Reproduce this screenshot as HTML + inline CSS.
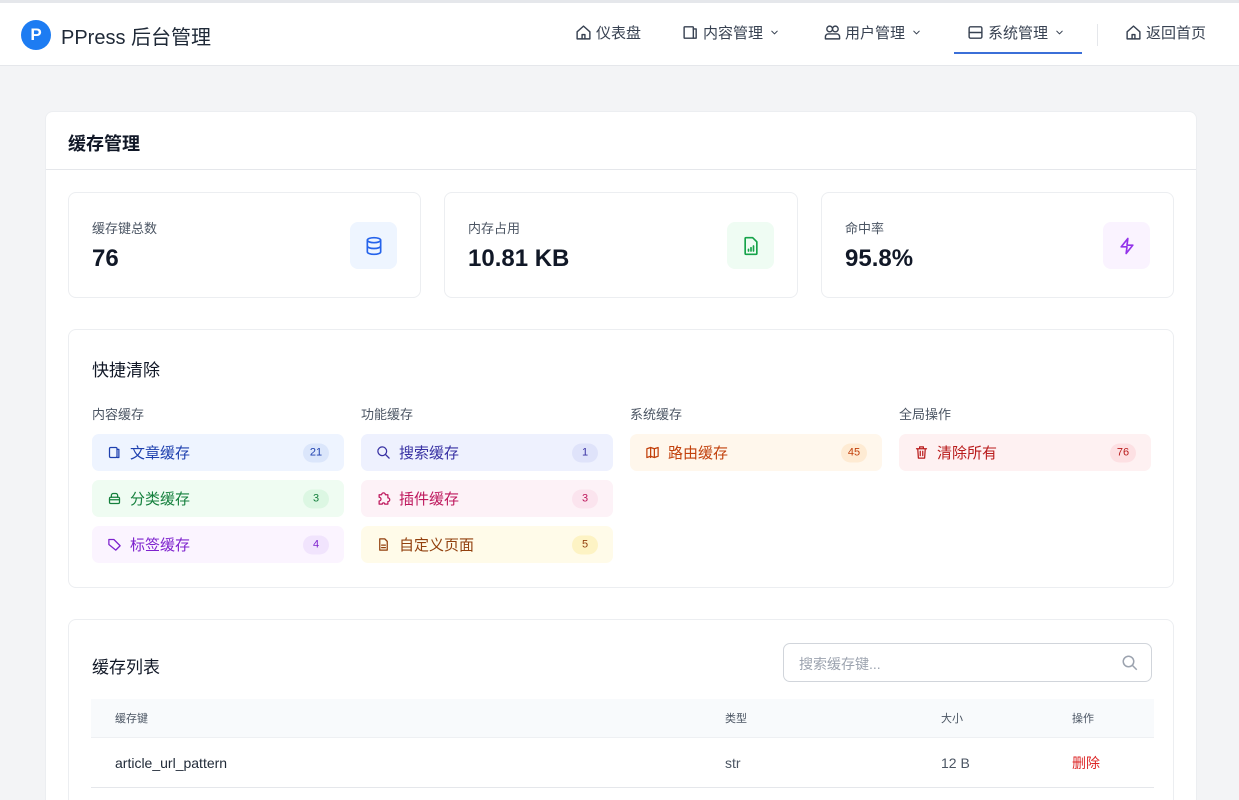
<!DOCTYPE html>
<html><head><meta charset="utf-8"><style>
*{box-sizing:border-box;margin:0;padding:0}
html,body{width:1239px;height:800px;overflow:hidden}
body{background:#f3f4f6;font-family:"Liberation Sans","Noto Sans CJK SC",sans-serif;color:#111827;position:relative}
.hdr{position:absolute;left:0;top:0;width:1239px;height:66px;background:#fff;border-top:3px solid #e5e7eb;border-bottom:1px solid #e5e7eb}
.logo{position:absolute;left:21px;top:17px;width:30px;height:30px;border-radius:50%;background:#1d7cf2;color:#fff;font-weight:bold;font-size:17px;text-align:center;line-height:30px}
.brand{position:absolute;left:61px;top:18px;font-size:20px;color:#1f2937}
.nav{position:absolute;top:19px;font-size:15px;color:#374151;display:flex;align-items:center;gap:4px}
.nav svg{width:17px;height:17px;fill:none;stroke:#374151;stroke-width:2;stroke-linecap:round;stroke-linejoin:round}
.nav .cv{width:11px;height:11px;margin-left:2px}
.ul{position:absolute;left:954px;top:49px;width:128px;height:2px;background:#3b6fd8}
.sep{position:absolute;left:1097px;top:21px;width:1px;height:22px;background:#e5e7eb}
.card{position:absolute;left:45px;top:111px;width:1152px;height:689px;background:#fff;border-radius:8px 8px 0 0;border:1px solid #eceef1;border-bottom:none;overflow:hidden}
.ct{position:absolute;left:22px;top:18px;font-size:18px;font-weight:bold}
.cl{position:absolute;left:0;top:57px;width:100%;height:1px;background:#e5e7eb}
.box{position:absolute;background:#fff;border:1px solid #eceef1;border-radius:8px}
.sl{position:absolute;left:23px;top:25px;font-size:13px;color:#4b5563}
.sv{position:absolute;left:23px;top:52px;font-size:24px;font-weight:bold;color:#111827}
.ic{position:absolute;right:23px;top:29px;width:47px;height:47px;border-radius:8px;display:flex;align-items:center;justify-content:center}
.ic svg{width:20px;height:20px;fill:none;stroke-width:2;stroke-linecap:round;stroke-linejoin:round}
.gl{position:absolute;top:74px;font-size:13px;color:#4b5563}
.btn{position:absolute;width:252px;height:37px;border-radius:7px;display:flex;align-items:center;padding-left:15px;font-size:15px}
.btn svg{width:15px;height:15px;fill:none;stroke-width:2;stroke-linecap:round;stroke-linejoin:round;margin-right:8px}
.bd{position:absolute;right:15px;top:50%;transform:translateY(-50%);min-width:26px;height:19px;border-radius:10px;font-size:11px;text-align:center;line-height:19px;padding:0 5px}
.th{position:absolute;left:22px;top:79px;width:1063px;height:38px;background:#f8fafc;font-size:11px;color:#4b5563}
.tr{position:absolute;left:22px;top:117px;width:1063px;height:51px;border-top:1px solid #eef0f3;border-bottom:1px solid #e5e7eb;font-size:14px;color:#1f2937}
.th span,.tr span{position:absolute;top:50%;transform:translateY(-50%)}
</style></head><body>
<div class="hdr">
<div class="logo">P</div><div class="brand">PPress 后台管理</div>
<div class="nav" style="left:575px"><svg viewBox="0 0 24 24"><path d="M3 11l9-8 9 8v10H3z"/><path d="M10 21v-6h4v6"/></svg>仪表盘</div>
<div class="nav" style="left:682px"><svg viewBox="0 0 24 24"><rect x="3" y="4" width="13" height="16" rx="1"/><path d="M16 7h4v13h-4"/></svg>内容管理<svg class="cv" viewBox="0 0 24 24"><path d="M6 9l6 6 6-6"/></svg></div>
<div class="nav" style="left:824px"><svg viewBox="0 0 24 24"><circle cx="8" cy="7" r="4"/><circle cx="16" cy="7" r="4"/><path d="M2 21v-3a4 4 0 014-4h12a4 4 0 014 4v3z"/></svg>用户管理<svg class="cv" viewBox="0 0 24 24"><path d="M6 9l6 6 6-6"/></svg></div>
<div class="nav" style="left:967px"><svg viewBox="0 0 24 24"><rect x="3" y="4" width="18" height="16" rx="2"/><path d="M3 12h18"/></svg>系统管理<svg class="cv" viewBox="0 0 24 24"><path d="M6 9l6 6 6-6"/></svg></div>
<div class="ul"></div><div class="sep"></div>
<div class="nav" style="left:1125px"><svg viewBox="0 0 24 24"><path d="M3 11l9-8 9 8v10H3z"/><path d="M10 21v-6h4v6"/></svg>返回首页</div>
</div>
<div class="card">
<div class="ct">缓存管理</div><div class="cl"></div>
<div class="box" style="left:22px;top:80px;width:353px;height:106px"><div class="sl">缓存键总数</div><div class="sv">76</div>
<div class="ic" style="background:#eef5ff"><svg viewBox="0 0 24 24" stroke="#2563eb"><ellipse cx="12" cy="5" rx="8" ry="3"/><path d="M4 5v14c0 1.7 3.6 3 8 3s8-1.3 8-3V5"/><path d="M4 12c0 1.7 3.6 3 8 3s8-1.3 8-3"/></svg></div></div>
<div class="box" style="left:398px;top:80px;width:354px;height:106px"><div class="sl">内存占用</div><div class="sv">10.81 KB</div>
<div class="ic" style="background:#effcf3"><svg viewBox="0 0 24 24" stroke="#16a34a"><path d="M14 2H6a1 1 0 00-1 1v18a1 1 0 001 1h12a1 1 0 001-1V7z"/><path d="M9 18v-2M12 18v-4M15 18v-6"/></svg></div></div>
<div class="box" style="left:775px;top:80px;width:353px;height:106px"><div class="sl">命中率</div><div class="sv">95.8%</div>
<div class="ic" style="background:#faf3ff"><svg viewBox="0 0 24 24" stroke="#9333ea"><path d="M13 3L5 13h7l-1 8 8-10h-7z"/></svg></div></div>
<div class="box" style="left:22px;top:217px;width:1106px;height:259px">
<div style="position:absolute;left:23px;top:26px;font-size:17px">快捷清除</div>
<div class="gl" style="left:23px">内容缓存</div><div class="gl" style="left:292px">功能缓存</div><div class="gl" style="left:561px">系统缓存</div><div class="gl" style="left:830px">全局操作</div>
<div class="btn" style="left:23px;top:104px;background:#eef4ff;color:#1e40af"><svg viewBox="0 0 24 24" stroke="#1e40af"><rect x="4" y="4" width="12" height="16" rx="2"/><path d="M16 7h3v13h-3"/></svg>文章缓存<span class="bd" style="background:#dbe6fb">21</span></div>
<div class="btn" style="left:23px;top:150px;background:#effcf2;color:#15803d"><svg viewBox="0 0 24 24" stroke="#15803d"><rect x="4" y="10" width="16" height="10" rx="2"/><path d="M7 10V7a3 3 0 013-3h4a3 3 0 013 3v3M4 14h16"/></svg>分类缓存<span class="bd" style="background:#dcf7e3">3</span></div>
<div class="btn" style="left:23px;top:196px;background:#fbf4ff;color:#7e22ce"><svg viewBox="0 0 24 24" stroke="#7e22ce"><path d="M3 12V4h8l10 10-7 7z"/></svg>标签缓存<span class="bd" style="background:#f1e4fd">4</span></div>
<div class="btn" style="left:292px;top:104px;background:#eef1fe;color:#3730a3"><svg viewBox="0 0 24 24" stroke="#3730a3"><circle cx="10" cy="10" r="7"/><path d="M15 15l6 6"/></svg>搜索缓存<span class="bd" style="background:#dfe3fa">1</span></div>
<div class="btn" style="left:292px;top:150px;background:#fdf2f7;color:#be185d"><svg viewBox="0 0 24 24" stroke="#be185d"><path d="M12 3a3 3 0 013 3h4v5a3 3 0 010 6v4h-5a2 2 0 00-4 0H5v-5a3 3 0 000-6V6h4a3 3 0 013-3z"/></svg>插件缓存<span class="bd" style="background:#fbe4ee">3</span></div>
<div class="btn" style="left:292px;top:196px;background:#fffbe9;color:#92400e"><svg viewBox="0 0 24 24" stroke="#92400e"><path d="M14 3H6v18h12V7z"/><path d="M9 13h6M9 17h6"/></svg>自定义页面<span class="bd" style="background:#fdf3c4">5</span></div>
<div class="btn" style="left:561px;top:104px;background:#fff7ec;color:#c2410c"><svg viewBox="0 0 24 24" stroke="#c2410c"><path d="M3 6l6-2 6 2 6-2v14l-6 2-6-2-6 2z"/><path d="M9 4v16M15 6v14"/></svg>路由缓存<span class="bd" style="background:#feebd3">45</span></div>
<div class="btn" style="left:830px;top:104px;background:#fef1f2;color:#b91c1c"><svg viewBox="0 0 24 24" stroke="#b91c1c"><path d="M4 6h16M9 6V3h6v3M6 6l1 15h10l1-15M10 10v7M14 10v7"/></svg>清除所有<span class="bd" style="background:#fde0e3">76</span></div>
</div>
<div class="box" style="left:22px;top:507px;width:1106px;height:190px">
<div style="position:absolute;left:23px;top:33px;font-size:17px">缓存列表</div>
<div style="position:absolute;left:714px;top:23px;width:369px;height:39px;border:1px solid #d1d5db;border-radius:7px;font-size:14px;color:#9ca3af;padding:10px 15px">搜索缓存键...
<svg style="position:absolute;right:12px;top:10px;width:18px;height:18px;fill:none;stroke:#9ca3af;stroke-width:2" viewBox="0 0 24 24"><circle cx="10" cy="10" r="7"/><path d="M15 15l6 6"/></svg></div>
<div class="th"><span style="left:24px">缓存键</span><span style="left:634px">类型</span><span style="left:850px">大小</span><span style="left:981px">操作</span></div>
<div class="tr"><span style="left:24px">article_url_pattern</span><span style="left:634px;color:#4b5563">str</span><span style="left:850px;color:#4b5563">12 B</span><span style="left:981px;color:#dc2626">删除</span></div>
</div>
</div>
</body></html>
